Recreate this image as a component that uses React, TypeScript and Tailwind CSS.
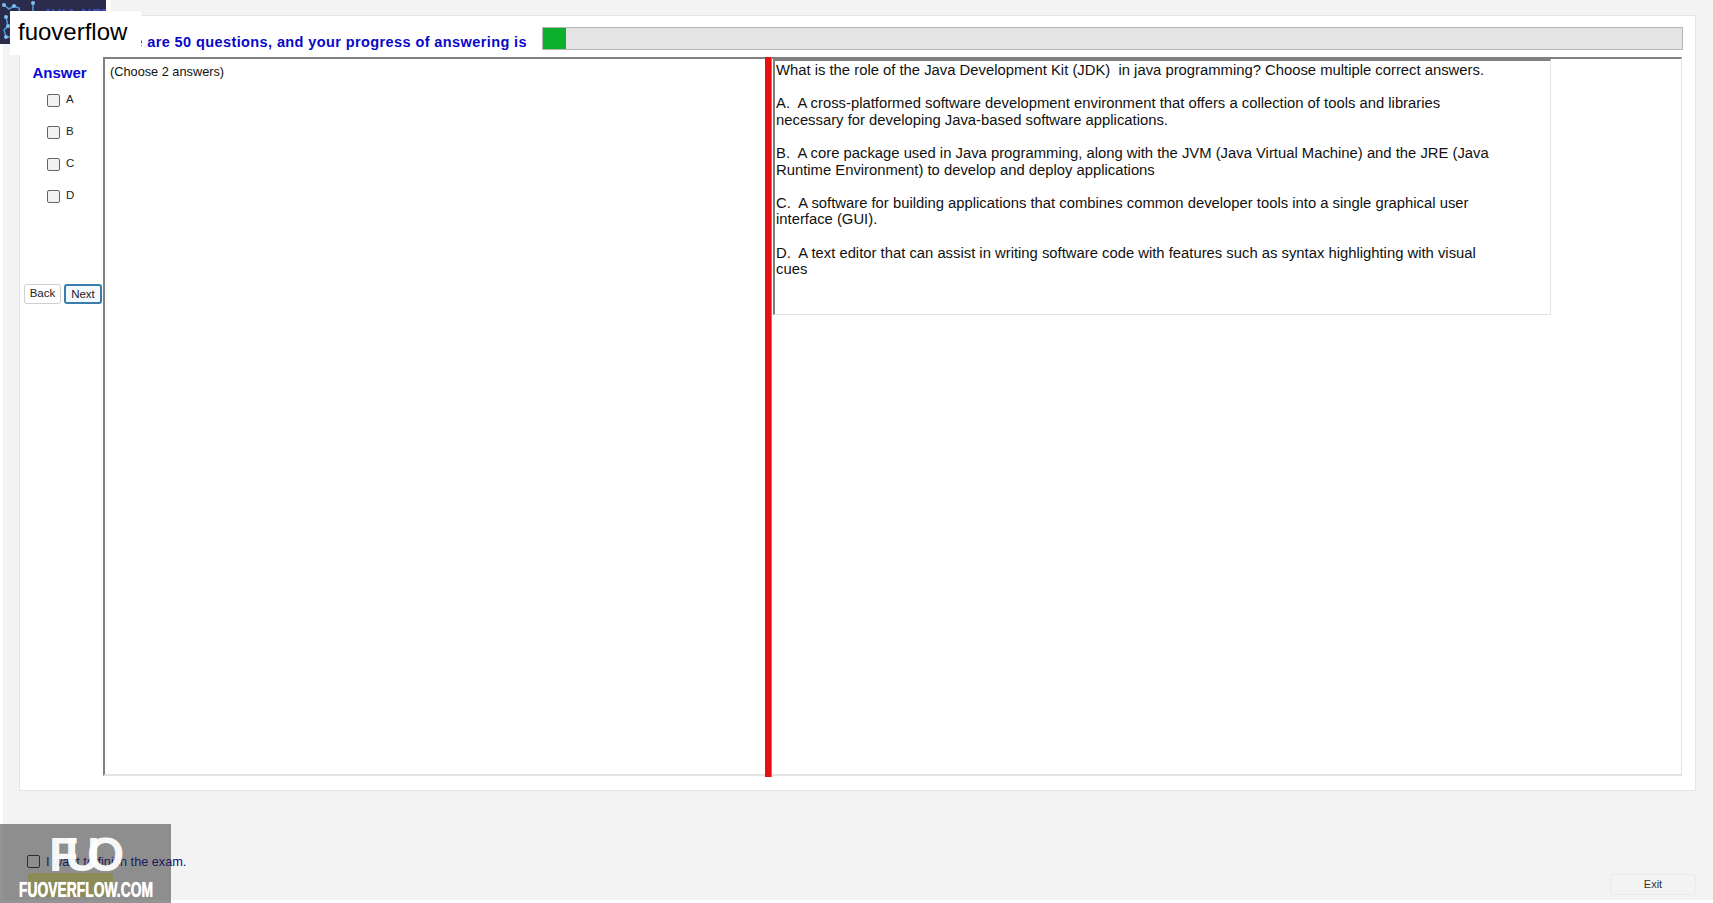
const question = `What is the role of the Java Development Kit (JDK)  in java programming? Choose multiple correct answers.

A.  A cross-platformed software development environment that offers a collection of tools and libraries
necessary for developing Java-based software applications.

B.  A core package used in Java programming, along with the JVM (Java Virtual Machine) and the JRE (Java
Runtime Environment) to develop and deploy applications

C.  A software for building applications that combines common developer tools into a single graphical user
interface (GUI).

D.  A text editor that can assist in writing software code with features such as syntax highlighting with visual
cues`;

function Check({ label }: { label: string }) {
  return (
    <label className="flex h-[32px] items-center pl-[27px] text-[11.5px] text-[#222]">
      <span className="h-[13px] w-[13px] rounded-[2px] border border-[#666] bg-[#f1f1f1]" />
      <span className="ml-[6px]">{label}</span>
    </label>
  );
}

function CircuitLogo() {
  return (
    <svg width="43" height="44" viewBox="0 0 43 44" fill="none" stroke="#4f9bd9" strokeWidth="1.5" className="shrink-0">
      <path d="M4 5 L9 9 L14 6 L19 8 L20 13" />
      <path d="M33 3 V16" />
      <path d="M6 17 L8 26 L4 30 L6 37 L12 37" />
      <g fill="#7fc0ee" stroke="none">
        <circle cx="4" cy="5" r="2" />
        <circle cx="14" cy="6" r="2" />
        <circle cx="33" cy="3" r="2" />
        <circle cx="6" cy="17" r="2" />
        <circle cx="8" cy="26" r="2" />
        <circle cx="6" cy="37" r="2" />
      </g>
    </svg>
  );
}

export default function App() {
  return (
    <div className="relative flex h-[903px] w-[1713px] flex-col overflow-hidden bg-white font-['Liberation_Sans',Arial,sans-serif]">
      {/* page */}
      <div className="ml-[3px] flex h-[900px] flex-col bg-[#f3f3f3] pl-[16px] pr-[17px] pt-[15px]">
        {/* card */}
        <div className="flex h-[776px] shrink-0 flex-col border border-[#e6e6e6] bg-white pr-[12px]">
          {/* header */}
          <div className="flex h-[41px] items-start pt-[11px]">
            <div className="w-[507px] whitespace-nowrap text-right text-[14.5px] font-bold leading-[30px] tracking-[0.4px] text-[#0808c8]">
              There are 50 questions, and your progress of answering is
            </div>
            <div className="ml-[15px] flex h-[23px] flex-1 border border-[#b5b5b5] bg-[#e4e4e4]">
              <div className="w-[23px] bg-[#0cb02a]" />
            </div>
          </div>
          {/* body */}
          <div className="mr-[1px] flex h-[719px]">
            <div className="w-[83px] shrink-0">
              <div className="h-[27px] pr-[4px] pt-[7px] text-center text-[15px] font-bold leading-[18px] text-[#0808d8]">Answer</div>
              <Check label="A" />
              <Check label="B" />
              <Check label="C" />
              <Check label="D" />
              <div className="mt-[72px] flex gap-[3px] pl-[4px]">
                <button className="h-[20px] w-[37px] rounded-[3px] border border-[#cfcfcf] bg-white text-[11.5px] text-[#222]">Back</button>
                <button className="h-[20px] w-[38px] rounded-[3px] border-2 border-[#3a7dac] bg-[#f4f9fd] text-[11.5px] text-[#222]">Next</button>
              </div>
            </div>
            <div className="flex flex-1 border-b-2 border-l-2 border-r border-t-2 border-b-[#e3e3e3] border-l-[#808080] border-r-[#e3e3e3] border-t-[#808080]">
              <div className="w-[660px] shrink-0 pl-[5px] pt-[4px] text-[12.75px] leading-[18px] text-[#111]">(Choose 2 answers)</div>
              <div className="-mb-[3px] -mt-[2px] w-[7px] shrink-0 border-r border-r-[#8a8a8a] bg-[#e80f0f]" />
              <div className="flex-1 pl-[1px]">
                <div className="h-[256px] w-[778px] whitespace-pre border-b border-l-2 border-r border-t-2 border-b-[#e3e3e3] border-l-[#808080] border-r-[#e3e3e3] border-t-[#808080] pl-[1px] pt-[1px] text-[14.82px] leading-[16.6px] text-[#111]">
                  {question}
                </div>
              </div>
            </div>
          </div>
        </div>
        {/* footer */}
        <div className="flex flex-1 justify-between pl-[8px] pt-[61px]">
          <div>
            <label className="flex h-[18px] items-center text-[12.7px] text-[#0a0a8c]">
              <span className="h-[13px] w-[13px] rounded-[2px] border border-[#333] bg-[#f3f3f3]" />
              <span className="ml-[6px] pt-[4px]">I want to finish the exam.</span>
            </label>
            <button className="ml-[1px] mt-[3px] block h-[24px] w-[85px] rounded-[3px] bg-[#ecec86] text-[12px] text-[#dddd70]">Finish</button>
          </div>
          <button className="mt-[22px] h-[21px] w-[86px] rounded-[3px] border border-[#ebebeb] bg-[#f3f3f3] text-[11px] text-[#333]">Exit</button>
        </div>
      </div>

      {/* logo behind the label */}
      <div className="absolute left-0 top-0 flex h-[44px] w-[106px] overflow-hidden bg-[#2b2c4c]">
        <CircuitLogo />
        <span className="pt-[4px] text-[14px] font-bold leading-[20px] tracking-[0.5px] text-[#3f4fc0]">4UIA.NET</span>
      </div>
      <div className="absolute left-[106px] top-0 h-[15px] w-[5px] bg-white" />

      {/* site label */}
      <div className="absolute left-[10px] top-[11px] flex h-[44px] w-[131px] items-center bg-white pb-[2px] pl-[8px] text-[24px] text-black">fuoverflow</div>

      {/* watermark */}
      <div className="absolute bottom-0 left-0 h-[79px] w-[171px] bg-[#2a2a2a]/50">
        <div className="absolute left-[49px] top-[6px] text-[48px] font-bold leading-[50px] tracking-[-13px] text-white/95">FUO</div>
        <div className="absolute left-[19px] top-[55px] origin-left scale-x-[0.63] whitespace-nowrap text-[22px] font-bold leading-[22px] text-white [text-shadow:0_0_1px_white]">FUOVERFLOW.COM</div>
      </div>
    </div>
  );
}
